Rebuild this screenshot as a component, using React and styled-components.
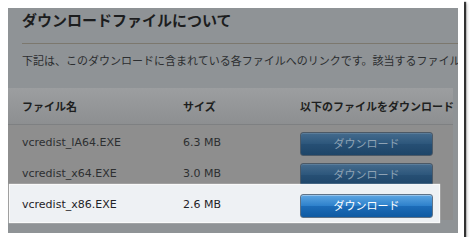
import React from "react";
import styled, { createGlobalStyle } from "styled-components";

const Global = createGlobalStyle`
  html, body { margin: 0; padding: 0; background: #ffffff; }
  body { font-family: "Noto Sans CJK JP", "Noto Sans", sans-serif; }
`;

const JP = `"Noto Sans CJK JP", "Noto Sans", sans-serif`;
const LATIN = `"DejaVu Sans", Verdana, sans-serif`;

const Frame = styled.div`
  width: 464px;
  height: 237px;
  box-sizing: border-box;
  padding: 8px 6px 4px 8px;
  background: #ffffff;
  box-shadow: 2px 2px 1px rgba(0, 0, 0, 0.75), 3px 3px 3px rgba(0, 0, 0, 0.25);
`;

const Panel = styled.div`
  width: 450px;
  height: 225px;
  background: #8f9396;
  overflow: hidden;
  display: flex;
  flex-direction: column;
`;

const Intro = styled.div`
  padding-left: 14px;
  display: flex;
  flex-direction: column;
`;

const Title = styled.h1`
  margin: 2px 0 0 0;
  font-family: ${JP};
  font-size: 15px;
  line-height: 20px;
  font-weight: 700;
  color: #1c1d1e;
  white-space: nowrap;
`;

const Rule = styled.div`
  margin-top: 13px;
  height: 1px;
  background: #7c786e;
`;

const Lead = styled.p`
  margin: 8px 0 0 0;
  font-family: ${JP};
  font-size: 11px;
  line-height: 16px;
  color: #2c2e30;
  white-space: nowrap;
`;

const Table = styled.div`
  margin-top: 20px;
  width: 445px;
  display: flex;
  flex-direction: column;
`;

const cols = `grid-template-columns: 161px 117px 1fr;`;

const HeaderRow = styled.div`
  display: grid;
  ${cols}
  align-items: center;
  height: 36px;
  padding-left: 14px;
  background: linear-gradient(#9c9ea0, #8d8f91);
  border-bottom: 1px solid #7e8082;
`;

const HeadCell = styled.div`
  font-family: ${JP};
  font-size: 11px;
  font-weight: 700;
  color: #1e1f20;
  white-space: nowrap;
`;

const Body = styled.div`
  padding-top: 2px;
  display: flex;
  flex-direction: column;
  background: #8e8e8e;
`;

const Row = styled.div`
  display: grid;
  ${cols}
  align-items: center;
  height: 31px;
  padding-left: 14px;
  ${(p) =>
    p.$lit &&
    `
    margin: -4px 14px -2px 2px;
    padding: 4px 0 2px 12px;
    background: #eef1f4;
    box-shadow: 0 0 1px 1px rgba(255,255,255,0.95);
    position: relative;
  `}
`;

const Cell = styled.div`
  font-family: ${LATIN};
  font-size: 11px;
  color: ${(p) => (p.$lit ? "#1f2327" : "#2d2f31")};
  white-space: nowrap;
`;

const Button = styled.button`
  width: 133px;
  height: 24px;
  box-sizing: border-box;
  border-radius: 3px;
  padding: 0;
  font-family: ${JP};
  font-size: 11px;
  line-height: 1;
  cursor: pointer;
  border: 1px solid ${(p) => (p.$lit ? "#5f7387" : "#4c5966")};
  color: ${(p) => (p.$lit ? "#ffffff" : "#8ea2b4")};
  background: ${(p) =>
    p.$lit
      ? "linear-gradient(#5ea6e2, #2f82cc 48%, #1c6cb8 52%, #0f5aa2)"
      : "linear-gradient(#456b8d, #2d577c 48%, #264f74 52%, #1e4568)"};
  box-shadow: inset 0 1px 0 ${(p) => (p.$lit ? "rgba(255,255,255,0.35)" : "rgba(255,255,255,0.12)")};
`;

const files = [
  { name: "vcredist_IA64.EXE", size: "6.3 MB" },
  { name: "vcredist_x64.EXE", size: "3.0 MB" },
  { name: "vcredist_x86.EXE", size: "2.6 MB", lit: true },
];

export default function App() {
  return (
    <>
      <Global />
      <Frame>
        <Panel>
          <Intro>
            <Title>ダウンロードファイルについて</Title>
            <Rule />
            <Lead>
              下記は、このダウンロードに含まれている各ファイルへのリンクです。該当するファイル
            </Lead>
          </Intro>
          <Table>
            <HeaderRow>
              <HeadCell>ファイル名</HeadCell>
              <HeadCell>サイズ</HeadCell>
              <HeadCell>以下のファイルをダウンロード</HeadCell>
            </HeaderRow>
            <Body>
              {files.map((f) => (
                <Row key={f.name} $lit={f.lit}>
                  <Cell $lit={f.lit}>{f.name}</Cell>
                  <Cell $lit={f.lit}>{f.size}</Cell>
                  <div>
                    <Button $lit={f.lit}>ダウンロード</Button>
                  </div>
                </Row>
              ))}
            </Body>
          </Table>
        </Panel>
      </Frame>
    </>
  );
}
